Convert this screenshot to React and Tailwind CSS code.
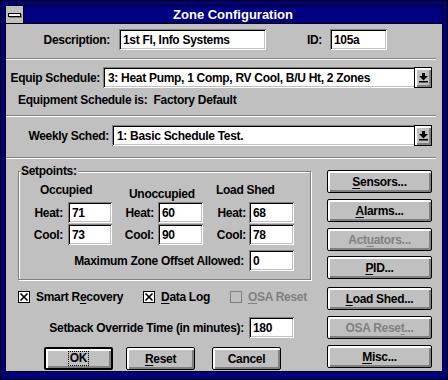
import React from 'react';

const bevelIn =
  'shadow-[inset_1px_1px_0_#808080,inset_-1px_-1px_0_#fff,inset_2px_2px_0_#000,inset_-2px_-2px_0_#c0c0c0]';
const bevelBtn =
  'shadow-[inset_1px_1px_0_#fff,inset_2px_2px_0_#fff,inset_-1px_-1px_0_#808080,inset_-2px_-2px_0_#808080]';

const U = ({ children }) => <span className="underline underline-offset-[2px] decoration-1">{children}</span>;

function Field({ value, className = '' }) {
  return (
    <div className={`h-[21px] bg-white flex items-center pl-[4px] ${bevelIn} ${className}`}>
      {value}
    </div>
  );
}

function Combo({ value, className = '' }) {
  return (
    <div className={`h-[21px] bg-white flex items-stretch ${bevelIn} ${className}`}>
      <div className="flex-1 flex items-center pl-[5px]">{value}</div>
      <div className={`w-[18px] bg-[#c0c0c0] border border-black flex items-center justify-center ${bevelBtn}`}>
        <svg width="9" height="10" viewBox="0 0 9 10">
          <rect x="3" y="0" width="3" height="3" fill="#000" />
          <polygon points="0,3 9,3 4.5,7.5" fill="#000" />
          <rect x="0" y="8" width="9" height="1.5" fill="#000" />
        </svg>
      </div>
    </div>
  );
}

function Btn({ children, className = '', def = false, disabled = false }) {
  return (
    <div
      className={`flex items-center justify-center bg-[#c0c0c0] rounded-[2px] border-black ${def ? 'border-2' : 'border'} ${bevelBtn} ${disabled ? 'text-[#808080]' : 'text-black'} ${className}`}
    >
      {children}
    </div>
  );
}

function Check({ checked, disabled }) {
  const c = disabled ? '#808080' : '#000';
  return (
    <svg width="12" height="12" viewBox="0 0 12 12" className="shrink-0">
      <rect x="0.5" y="0.5" width="11" height="11" fill={disabled ? '#c0c0c0' : '#fff'} stroke={c} />
      {checked && (
        <g stroke="#000" strokeWidth="1.6">
          <line x1="2.5" y1="2.5" x2="9.5" y2="9.5" />
          <line x1="9.5" y1="2.5" x2="2.5" y2="9.5" />
        </g>
      )}
    </svg>
  );
}

const Sep = ({ className = '' }) => (
  <div className={`h-[2px] w-[430px] border-t border-t-[#808080] border-b border-b-white ${className}`} />
);

export default function App() {
  return (
    <div className="w-[448px] h-[380px] bg-[#000080] border border-black pt-[4px] px-[4px] pb-[7px] font-['Liberation_Sans',Arial,sans-serif] font-bold text-[12px] leading-[14px] tracking-[-0.3px] text-black">
      <div className="border border-black flex flex-col">
        {/* title bar */}
        <div className="flex h-[17px] bg-[#000080] border-b border-black box-content">
          <div className="w-[18px] bg-[#c0c0c0] border-r border-black flex items-center justify-center">
            <div className="w-[13px] h-[4px] bg-white border border-black shadow-[1px_1px_0_#808080]" />
          </div>
          <div className="flex-1 text-center text-white text-[13px] leading-[17px] tracking-normal">Zone Configuration</div>
        </div>

        {/* client */}
        <div className="bg-[#c0c0c0] w-[436px] h-[347px] flex flex-col">
          <div className="mt-[5px] flex items-center h-[21px]">
            <div className="w-[113px] text-right pr-[9px]">Description:</div>
            <Field value="1st Fl, Info Systems" className="w-[147px]" />
            <div className="w-[64px] text-right pr-[8px]">ID:</div>
            <Field value="105a" className="w-[57px]" />
          </div>

          <Sep className="mt-[8px]" />

          <div className="mt-[7px] flex items-center h-[21px]">
            <div className="w-[97px] text-right pr-[3px]">Equip Schedule:</div>
            <Combo value="3: Heat Pump, 1 Comp, RV Cool, B/U Ht, 2 Zones" className="w-[329px]" />
          </div>
          <div className="mt-[5px] pl-[12px]">Equipment Schedule is:&nbsp; Factory Default</div>

          <Sep className="mt-[8px]" />

          <div className="mt-[8px] flex items-center h-[21px]">
            <div className="w-[106px] text-right pr-[3px]">Weekly Sched:</div>
            <Combo value="1: Basic Schedule Test." className="w-[320px]" />
          </div>

          <Sep className="mt-[11px]" />

          <div className="flex">
            {/* left column */}
            <div className="w-[321px] flex flex-col">
              <div className="relative mt-[12px] ml-[12px] w-[293px] h-[109px] border border-[#808080] shadow-[1px_1px_0_#fff,inset_1px_1px_0_#fff] flex flex-col">
                <div className="absolute left-[2px] top-[-8px] bg-[#c0c0c0] pr-[1px]">Setpoints:</div>
                <div className="flex items-start h-[18px] mt-[11px]">
                  <div className="w-[110px] pl-[21px]">Occupied</div>
                  <div className="w-[87px] mt-[4px]">Unoccupied</div>
                  <div>Load Shed</div>
                </div>
                <div className="flex items-center mt-[1px]">
                  <div className="w-[49px] text-right pr-[5px]">Heat:</div>
                  <Field value="71" className="w-[44px]" />
                  <div className="w-[46px] text-right pr-[4px]">Heat:</div>
                  <Field value="60" className="w-[45px]" />
                  <div className="w-[46px] text-right pr-[3px]">Heat:</div>
                  <Field value="68" className="w-[45px]" />
                </div>
                <div className="flex items-center mt-[1px]">
                  <div className="w-[49px] text-right pr-[5px]">Cool:</div>
                  <Field value="73" className="w-[44px]" />
                  <div className="w-[46px] text-right pr-[4px]">Cool:</div>
                  <Field value="90" className="w-[45px]" />
                  <div className="w-[46px] text-right pr-[3px]">Cool:</div>
                  <Field value="78" className="w-[45px]" />
                </div>
                <div className="flex items-center mt-[5px]">
                  <div className="w-[230px] text-right pr-[5px]">Maximum Zone Offset Allowed:</div>
                  <Field value="0" className="w-[45px]" />
                </div>
              </div>

              <div className="mt-[10px] flex items-center ml-[12px]">
                <div className="w-[125px] flex items-center gap-[6px]">
                  <Check checked />
                  <span>Smart R<U>e</U>covery</span>
                </div>
                <div className="w-[87px] flex items-center gap-[6px]">
                  <Check checked />
                  <span><U>D</U>ata Log</span>
                </div>
                <div className="flex items-center gap-[6px] text-[#808080]">
                  <Check disabled />
                  <span><U>O</U>SA Reset</span>
                </div>
              </div>

              <div className="mt-[13px] flex items-center">
                <div className="w-[243px] text-right pr-[5px]">Setback Override Time (in minutes):</div>
                <Field value="180" className="w-[45px]" />
              </div>

              <div className="mt-[9px] flex">
                <Btn def className="ml-[38px] w-[69px] h-[23px]">
                  <span className="outline outline-1 outline-dotted outline-black px-[1px] leading-[13px]">OK</span>
                </Btn>
                <Btn className="ml-[13px] w-[69px] h-[23px]"><span><U>R</U>eset</span></Btn>
                <Btn className="ml-[17px] w-[69px] h-[23px]">Cancel</Btn>
              </div>
            </div>

            {/* right column */}
            <div className="w-[105px] flex flex-col">
              <Btn className="mt-[11px] h-[23px]"><span><U>S</U>ensors...</span></Btn>
              <Btn className="mt-[6px] h-[23px]"><span><U>A</U>larms...</span></Btn>
              <Btn disabled className="mt-[6px] h-[23px]"><span>Act<U>u</U>ators...</span></Btn>
              <Btn className="mt-[5px] h-[23px]"><span><U>P</U>ID...</span></Btn>
              <Btn className="mt-[8px] h-[23px]"><span><U>L</U>oad Shed...</span></Btn>
              <Btn disabled className="mt-[6px] h-[23px]"><span>OSA Rese<U>t</U>...</span></Btn>
              <Btn className="mt-[6px] h-[23px]"><span><U>M</U>isc...</span></Btn>
            </div>
          </div>
        </div>
      </div>
    </div>
  );
}
